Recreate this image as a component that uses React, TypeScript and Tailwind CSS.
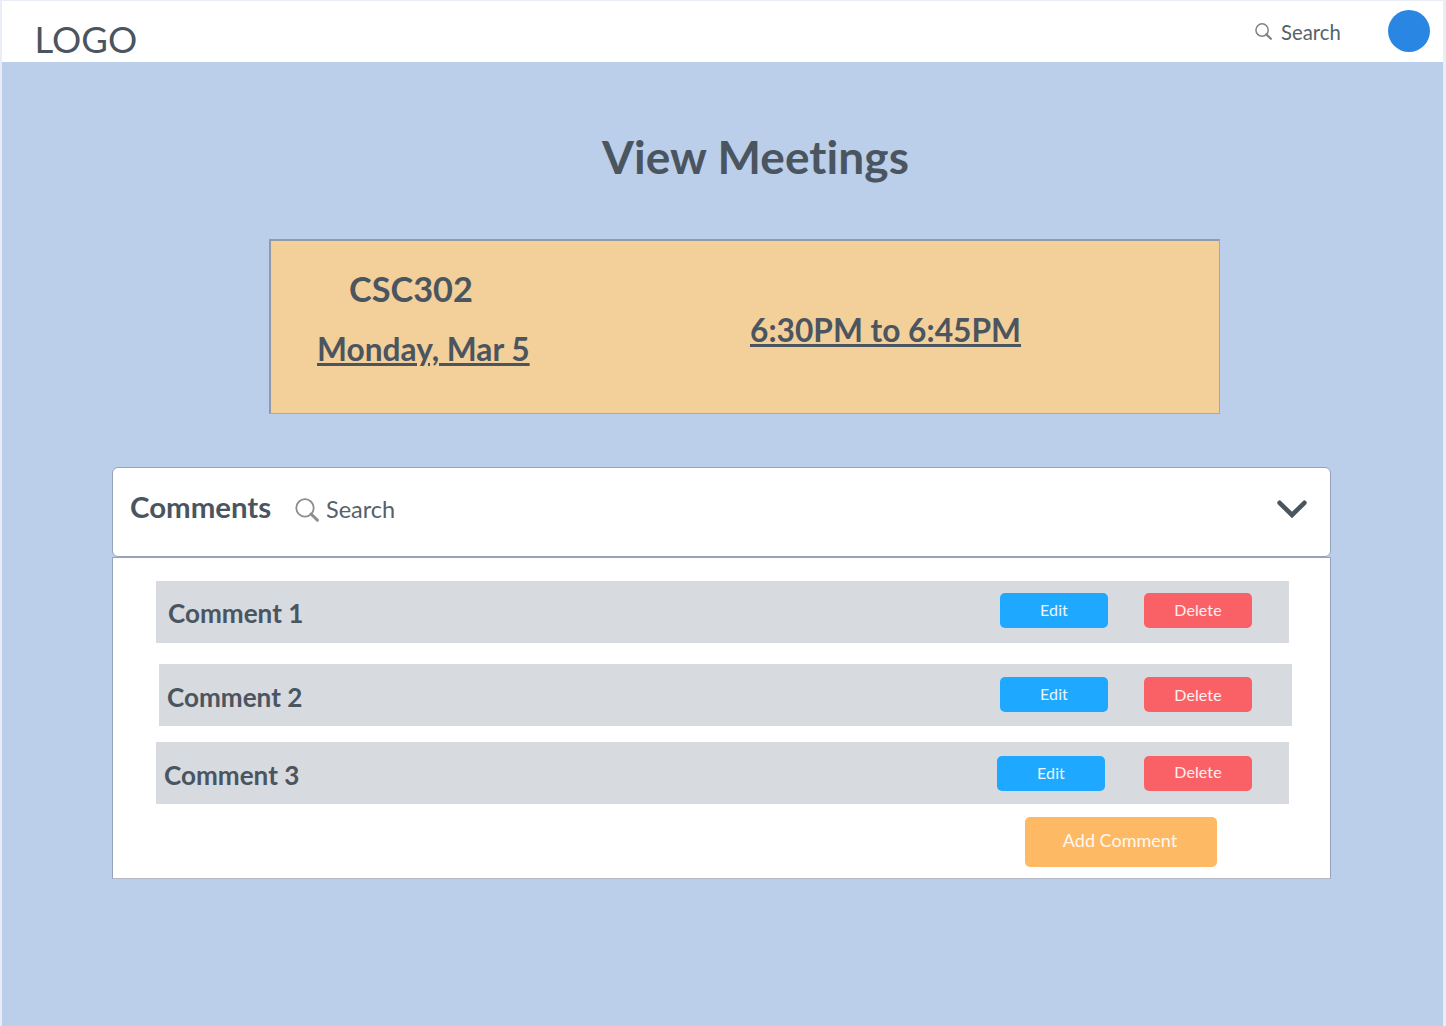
type CommentRow = {
  title: string;
  row: string;
  label: string;
  edit: string;
  editText: string;
  remove: string;
  removeText: string;
};

const comments: CommentRow[] = [
  {
    title: "Comment 1",
    row: "ml-[43px] mt-[23px]",
    label: "w-[844px] pl-[12px] mt-[16px]",
    edit: "mt-[12px]",
    editText: "mt-[7px]",
    remove: "mt-[12px] ml-[36px]",
    removeText: "mt-[7px]",
  },
  {
    title: "Comment 2",
    row: "ml-[46px] mt-[21px]",
    label: "w-[841px] pl-[8px] mt-[17px]",
    edit: "mt-[13px]",
    editText: "mt-[7px]",
    remove: "mt-[13px] ml-[36px]",
    removeText: "mt-[8px]",
  },
  {
    title: "Comment 3",
    row: "ml-[43px] mt-[16px]",
    label: "w-[841px] pl-[8px] mt-[17px]",
    edit: "mt-[14px]",
    editText: "mt-[7px]",
    remove: "mt-[14px] ml-[39px]",
    removeText: "mt-[6px]",
  },
];

function SearchIcon({ className, ring, handle }: { className: string; ring: number; handle: number }) {
  return (
    <svg viewBox="0 0 24 24" className={className} fill="none" stroke="currentColor">
      <circle cx="10" cy="9.9" r="8.7" strokeWidth={ring} />
      <path d="M16 16 L22.4 22.2" strokeWidth={handle} strokeLinecap="round" />
    </svg>
  );
}

function Header() {
  return (
    <header className="flex h-[61px] items-start bg-white">
      <div className="mt-[16px] ml-[32.5px] text-[36.5px] leading-[44px]">LOGO</div>
      <SearchIcon className="mt-[22px] ml-auto h-[17px] w-[17px] text-[#7b838b]" ring={2.1} handle={3.2} />
      <div className="mt-[19px] ml-[9px] w-[107px] text-[20.3px] leading-[24px] text-[#56616b]">Search</div>
      <div className="mt-[9px] mr-[13px] h-[42px] w-[42px] rounded-full bg-[#2a86e3]" />
    </header>
  );
}

function MeetingCard() {
  return (
    <section className="ml-[267px] flex h-[175px] w-[951px] border-t-2 border-r border-b border-l-2 border-t-[#8f9aaa] border-r-[#a5a8a9] border-b-[#a9abab] border-l-[#8f9aaa] bg-[#f3cf9a] font-bold">
      <div className="w-[479px]">
        <div className="mt-[28px] ml-[78px] text-[34.3px] leading-[40px]">CSC302</div>
        <div className="mt-[20px] ml-[46px] text-[31.7px] leading-[40px] underline">Monday, Mar 5</div>
      </div>
      <div className="mt-[69px] text-[31.7px] leading-[40px] underline">6:30PM to 6:45PM</div>
    </section>
  );
}

function CommentsPanel() {
  return (
    <section className="mt-[53px] ml-[110px] w-[1219px]">
      <div className="flex h-[90px] items-start rounded-[6px] border border-[#94a2ba] bg-white">
        <h2 className="mt-[22px] ml-[17px] w-[165px] text-[29.4px] leading-[34px] font-bold">Comments</h2>
        <SearchIcon className="mt-[30px] h-[24px] w-[24px] text-[#8e8e8e]" ring={1.8} handle={3} />
        <div className="mt-[27px] ml-[7px] text-[23.5px] leading-[28px] text-[#56616b]">Search</div>
        <svg
          viewBox="0 0 30 20"
          className="mt-[31px] mr-[23px] ml-auto h-[20px] w-[30px]"
          fill="none"
          stroke="#4a5560"
          strokeWidth="4.6"
          strokeLinecap="round"
          strokeLinejoin="miter"
        >
          <path d="M2.6 3.8 L15 16 L27.4 3.8" />
        </svg>
      </div>
      <div className="flex h-[322px] flex-col items-start border border-[#94a2ba] border-b-[#b4b9c5] bg-white">
        {comments.map((c) => (
          <div key={c.title} className={`flex h-[62px] w-[1133px] shrink-0 items-start bg-[#d7dadf] ${c.row}`}>
            <div className={`shrink-0 text-[26.1px] leading-[32px] font-bold ${c.label}`}>{c.title}</div>
            <button className={`flex h-[35px] w-[108px] shrink-0 items-start justify-center rounded-[5px] bg-[#1fa8ff] text-[16px] leading-[20px] tracking-[0.1px] text-white/90 ${c.edit}`}>
              <span className={c.editText}>Edit</span>
            </button>
            <button className={`flex h-[35px] w-[108px] shrink-0 items-start justify-center rounded-[5px] bg-[#f96167] text-[16px] leading-[20px] tracking-[0.1px] text-white/90 ${c.remove}`}>
              <span className={c.removeText}>Delete</span>
            </button>
          </div>
        ))}
        <button className="mt-[13px] ml-[912px] flex h-[50px] w-[192px] shrink-0 items-start justify-center rounded-[5px] bg-[#feb964] text-[18px] leading-[24px] text-white/90">
          <span className="mt-[11px] mr-[2px]">Add Comment</span>
        </button>
      </div>
    </section>
  );
}

export default function App() {
  return (
    <div className="h-[1026px] w-[1446px] overflow-hidden bg-[#e9edf6] pt-px pr-[3px] pl-[2px] font-['Lato',sans-serif] text-[#4a5560] [font-variant-ligatures:none]">
      <Header />
      <main className="h-[964px] bg-[#bbceea]">
        <h1 className="ml-[600px] pt-[67px] text-[46px] leading-[56px] font-bold tracking-[0.08px]">View Meetings</h1>
        <div className="h-[54px]" />
        <MeetingCard />
        <CommentsPanel />
      </main>
    </div>
  );
}
